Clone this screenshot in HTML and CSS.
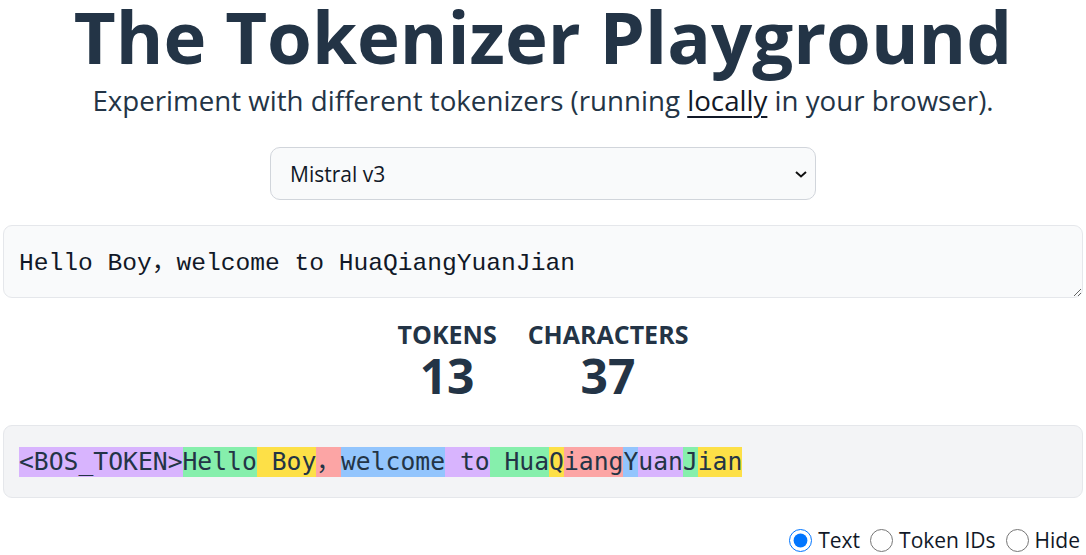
FILE: index.html
```html
<!DOCTYPE html>
<html lang="en">
<head>
<meta charset="utf-8">
<title>The Tokenizer Playground</title>
<link rel="stylesheet" href="styles.css">
</head>
<body>
<main class="page">
  <h1 class="title">The Tokenizer Playground</h1>
  <p class="subtitle">Experiment with different tokenizers (running <a class="link" href="#">locally</a> in your browser).</p>

  <div class="select-wrap">
    <select class="model-select">
      <option>Mistral v3</option>
    </select>
  </div>

  <textarea class="input-box" rows="1">Hello Boy，welcome to HuaQiangYuanJian</textarea>

  <div class="stats">
    <div class="stat">
      <div class="stat-label">TOKENS</div>
      <div class="stat-value">13</div>
    </div>
    <div class="stat">
      <div class="stat-label">CHARACTERS</div>
      <div class="stat-value">37</div>
    </div>
  </div>

  <div class="tokens"><span class="tok purple">&lt;BOS_TOKEN&gt;</span><span class="tok green">Hello</span><span class="tok yellow"> Boy</span><span class="tok red">，</span><span class="tok blue">welcome</span><span class="tok purple"> to</span><span class="tok green"> Hua</span><span class="tok yellow">Q</span><span class="tok red">iang</span><span class="tok blue">Y</span><span class="tok purple">uan</span><span class="tok green">J</span><span class="tok yellow">ian</span></div>

  <div class="options">
    <label class="opt"><input type="radio" name="mode" checked>Text</label>
    <label class="opt"><input type="radio" name="mode">Token IDs</label>
    <label class="opt"><input type="radio" name="mode">Hide</label>
  </div>
</main>
</body>
</html>
```

FILE: styles.css
```css
* { box-sizing: border-box; }
html, body { margin: 0; padding: 0; background: #ffffff; }
body {
  font-family: "Open Sans", "Noto Sans", sans-serif;
  color: #233446;
}
.page {
  padding: 0 3px;
  display: flex;
  flex-direction: column;
}
.title {
  margin: 0;
  font-size: 72.5px;
  line-height: 72px;
  font-weight: 700;
  text-align: center;
  color: #233446;
}
.subtitle {
  margin: 8px 0 0 0;
  font-size: 27.7px;
  line-height: 40px;
  text-align: center;
  color: #233446;
}
.link { color: #111827; text-decoration: underline; text-underline-offset: 5px; text-decoration-thickness: 2px; }
.select-wrap {
  display: flex;
  justify-content: center;
  margin-top: 27px;
}
.model-select {
  appearance: none;
  width: 546px;
  height: 53px;
  padding: 0 40px 0 19px;
  font-family: "Open Sans", "Noto Sans", sans-serif;
  font-size: 21px;
  color: #111827;
  background-color: #f9fafb;
  background-image: url("data:image/svg+xml,%3Csvg xmlns='http://www.w3.org/2000/svg' width='14' height='10' viewBox='0 0 14 10'%3E%3Cpath d='M2 3l5 4.5L12 3' fill='none' stroke='%23111' stroke-width='2'/%3E%3C/svg%3E");
  background-repeat: no-repeat;
  background-position: right 7px center;
  border: 1px solid #d1d5db;
  border-radius: 10px;
}
.input-box {
  display: block;
  margin-top: 25px;
  width: 100%;
  height: 73px;
  padding: 20px 15px 15px;
  font-family: "Liberation Mono", "DejaVu Sans Mono", "Noto Sans CJK SC", monospace;
  font-size: 24.6px;
  line-height: 36px;
  color: #111827;
  background: #f9fafb;
  border: 1px solid #e5e7eb;
  border-radius: 9px;
  resize: vertical;
  overflow: hidden;
}
.stats {
  display: flex;
  justify-content: center;
  gap: 31px;
  margin-top: 20px;
}
.stat { text-align: center; }
.stat-label {
  font-size: 25px;
  line-height: 32px;
  font-weight: 700;
  color: #233446;
}
.stat-value {
  font-size: 48px;
  line-height: 52px;
  font-weight: 700;
  color: #233446;
}
.tokens {
  margin-top: 23px;
  height: 73px;
  padding: 0 15px;
  display: flex;
  align-items: center;
  font-family: "DejaVu Sans Mono", "Noto Sans CJK SC", monospace;
  font-size: 24.7px;
  color: #233446;
  background: #f3f4f6;
  border: 1px solid #e5e7eb;
  border-radius: 9px;
  white-space: pre;
}
.tok { line-height: 30px; height: 30px; display: inline-block; }
.purple { background: #d8b4fe; }
.green { background: #86efac; }
.yellow { background: #fde047; }
.red { background: #fca5a5; }
.blue { background: #93c5fd; }
.options {
  display: flex;
  justify-content: flex-end;
  gap: 10px;
  margin-top: 28px;
  padding-right: 3px;
  font-family: "Open Sans", "Noto Sans", sans-serif;
  font-size: 21px;
  color: #111827;
}
.opt {
  display: flex;
  align-items: center;
  gap: 6px;
}
.opt input {
  width: 23px;
  height: 23px;
  margin: 0;
  accent-color: #0075ff;
}
```
